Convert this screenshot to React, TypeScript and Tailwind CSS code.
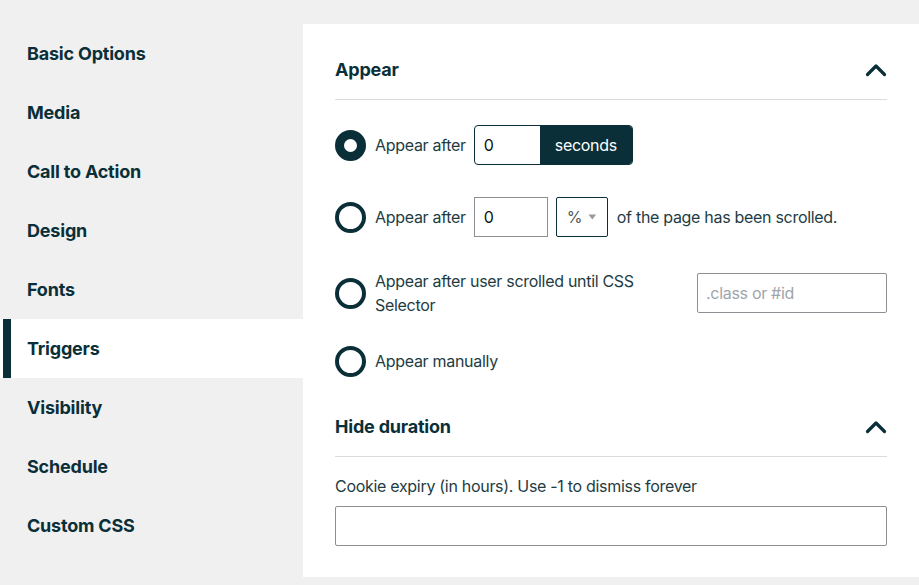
import React from "react";

const items = ["Basic Options", "Media", "Call to Action", "Design", "Fonts", "Triggers", "Visibility", "Schedule", "Custom CSS"];

function Chevron() {
  return (
    <svg width="22" height="14" viewBox="0 0 22 14" fill="none">
      <path d="M2.5 11.5 L11 3 L19.5 11.5" stroke="#0a2f38" strokeWidth="3.2" strokeLinecap="round" strokeLinejoin="round" />
    </svg>
  );
}

function Radio({ checked }: { checked?: boolean }) {
  return (
    <span className={`block h-[31px] w-[31px] shrink-0 rounded-full border-[#0a2f38] ${checked ? "border-[9px]" : "border-[4px]"}`} />
  );
}

export default function App() {
  return (
    <div className="flex min-h-[585px] w-[919px] bg-[#f0f0f0] pt-[24px] pb-[8px] text-[#0a2f38]" style={{ fontFamily: "Inter, 'Liberation Sans', sans-serif" }}>
      <nav className="flex w-[303px] shrink-0 flex-col">
        {items.map((it) => (
          <div key={it} className={`relative flex h-[59px] items-center pl-[27px] text-[18px] font-bold tracking-[-0.2px] ${it === "Triggers" ? "bg-white" : ""}`}>
            {it === "Triggers" && <span className="absolute left-[3px] top-0 h-full w-[8px] bg-[#0a2f38]" />}
            {it}
          </div>
        ))}
      </nav>
      <main className="flex-1 bg-white px-[32px] pt-[28px] pb-[31px]">
        <div className="flex h-[48px] items-start justify-between border-b border-[#dcdcdc]">
          <h2 className="text-[18px] font-bold leading-[36px] tracking-[-0.2px]">Appear</h2>
          <span className="mt-[11px]"><Chevron /></span>
        </div>
        <div className="flex flex-col text-[16px] tracking-[-0.3px] text-[#1e3c43]">
          <div className="mt-[25px] flex h-[40px] items-center">
            <Radio checked />
            <span className="ml-[9px] mr-[8px]">Appear after</span>
            <div className="flex h-[40px] overflow-hidden rounded-[4px] border border-[#0a2f38]">
              <span className="flex w-[65px] items-center px-[9px] text-[#111]">0</span>
              <span className="flex w-[92px] items-center justify-center bg-[#0a2f38] text-white">seconds</span>
            </div>
          </div>
          <div className="mt-[32px] flex h-[40px] items-center">
            <Radio />
            <span className="ml-[9px] mr-[8px]">Appear after</span>
            <span className="flex h-[40px] w-[74px] items-center border border-[#8c8f94] px-[9px] text-[#111]">0</span>
            <span className="ml-[8px] flex h-[40px] w-[52px] items-center gap-[6px] rounded-[2px] border border-[#0a2f38] px-[10px] text-[#555]">
              %
              <svg width="9" height="6" viewBox="0 0 9 6"><path d="M0.5 0.5 H8.5 L4.5 5.5 Z" fill="#9a9a9a" /></svg>
            </span>
            <span className="ml-[9px]">of the page has been scrolled.</span>
          </div>
          <div className="mt-[36px] flex h-[40px] items-center">
            <Radio />
            <span className="ml-[9px] w-[280px] leading-[24px]">Appear after user scrolled until CSS Selector</span>
            <span className="ml-auto flex h-[40px] w-[190px] items-center rounded-[2px] border border-[#8c8f94] px-[8px] text-[#a0a5aa]">.class or #id</span>
          </div>
          <div className="mt-[28px] flex h-[40px] items-center">
            <Radio />
            <span className="ml-[9px]">Appear manually</span>
          </div>
        </div>
        <div className="mt-[28px] flex h-[48px] items-start justify-between border-b border-[#dcdcdc]">
          <h2 className="text-[18px] font-bold leading-[36px] tracking-[-0.2px]">Hide duration</h2>
          <span className="mt-[11px]"><Chevron /></span>
        </div>
        <div className="mt-[17px] text-[16px] leading-[24px] tracking-[-0.3px] text-[#1e3c43]">Cookie expiry (in hours). Use -1 to dismiss forever</div>
        <div className="mt-[8px] h-[40px] rounded-[2px] border border-[#8c8f94]" />
      </main>
    </div>
  );
}
